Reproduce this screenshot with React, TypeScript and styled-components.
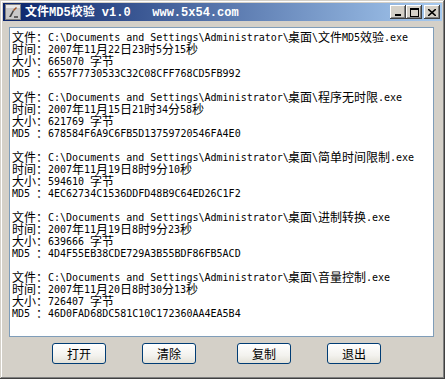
import React from 'react';
import styled, { createGlobalStyle } from 'styled-components';

type Entry = {
  file: string;
  time: string;
  size: string;
  md5: string;
};

const entries: Entry[] = [
  {
    file: '文件MD5效验.exe',
    time: '2007年11月22日23时5分15秒',
    size: '665070',
    md5: '6557F7730533C32C08CFF768CD5FB992',
  },
  {
    file: '程序无时限.exe',
    time: '2007年11月15日21时34分58秒',
    size: '621769',
    md5: '678584F6A9C6FB5D13759720546FA4E0',
  },
  {
    file: '简单时间限制.exe',
    time: '2007年11月19日8时9分10秒',
    size: '594610',
    md5: '4EC62734C1536DDFD48B9C64ED26C1F2',
  },
  {
    file: '进制转换.exe',
    time: '2007年11月19日8时9分23秒',
    size: '639666',
    md5: '4D4F55EB38CDE729A3B55BDF86FB5ACD',
  },
  {
    file: '音量控制.exe',
    time: '2007年11月20日8时30分13秒',
    size: '726407',
    md5: '46D0FAD68DC581C10C172360AA4EA5B4',
  },
];

const buttons = [
  { label: '打开', extra: 0 },
  { label: '清除', extra: 0 },
  { label: '复制', extra: 5 },
  { label: '退出', extra: 0 },
];

const GlobalStyle = createGlobalStyle`
  html, body {
    margin: 0;
    padding: 0;
    background: #d4d0c8;
  }
`;

const StDivWindow = styled.div`
  box-sizing: border-box;
  width: 445px;
  height: 379px;
  padding: 3px;
  background: #d4d0c8;
  box-shadow: inset -1px -1px #404040, inset 1px 1px #d4d0c8,
    inset -2px -2px #808080, inset 2px 2px #ffffff;
  display: flex;
  flex-direction: column;
`;

const StDivTitleBar = styled.div`
  height: 18px;
  display: flex;
  align-items: center;
  padding: 0 2px;
  background: linear-gradient(to right, #0a246a, #a6caf0);
`;

const StSpanTitle = styled.span`
  flex: 1;
  margin-left: 4px;
  color: #ffffff;
  font-weight: bold;
  font-size: 12px;
  line-height: 18px;
  white-space: pre;
`;

const StSpanTitleAscii = styled.span`
  font-family: 'Liberation Mono', monospace;
`;

const StSpanTitleCjk = styled.span`
  font-family: 'Noto Sans CJK SC', sans-serif;
`;

const StDivCaptionButtons = styled.div`
  display: flex;
  align-items: center;
`;

const StButtonCaption = styled.div<{ $gapLeft: number }>`
  box-sizing: border-box;
  width: 16px;
  height: 14px;
  margin-left: ${({ $gapLeft }) => $gapLeft}px;
  background: #d4d0c8;
  box-shadow: inset -1px -1px #404040, inset 1px 1px #ffffff,
    inset -2px -2px #808080, inset 2px 2px #d4d0c8;
  display: flex;
  align-items: center;
  justify-content: center;
`;

const StDivBody = styled.div`
  flex: 1;
  display: flex;
  flex-direction: column;
  padding: 6px 0 0 6px;
`;

const StDivTextArea = styled.div`
  box-sizing: border-box;
  width: 425px;
  height: 310px;
  border: 1px solid #7f9db9;
  background: #ffffff;
  padding: 3px 2px;
  color: #000000;
`;

const StDivLine = styled.div`
  display: flex;
  align-items: flex-start;
  height: 12px;
  white-space: pre;
`;

// every half-width char sits in a 6px cell, every CJK char in a 12px cell
const StSpanAscii = styled.span`
  display: inline-block;
  height: 12px;
  font-family: 'DejaVu Sans Mono', monospace;
  font-size: 10px;
  line-height: 14px;
`;

const StSpanCjk = styled.span`
  display: inline-block;
  height: 12px;
  font-family: 'Noto Sans CJK SC', sans-serif;
  font-size: 12px;
  line-height: 12px;
`;

const StDivButtonRow = styled.div`
  display: flex;
  margin-top: 6px;
  padding-left: 43px;
  gap: 36px;
`;

const StButton = styled.button<{ $extra: number }>`
  box-sizing: border-box;
  width: 54px;
  height: 21px;
  margin-left: ${({ $extra }) => $extra}px;
  padding: 0;
  border: 1px solid #003c74;
  border-radius: 3px;
  background: linear-gradient(to bottom, #ffffff 0%, #f3f2ee 60%, #e3e1d8 100%);
  color: #000000;
  font-family: 'Noto Sans CJK SC', sans-serif;
  font-size: 12px;
  line-height: 19px;
`;

const isCjk = (ch: string) => ch.charCodeAt(0) > 0x2e80;

const splitRuns = (text: string) => {
  const runs: { cjk: boolean; value: string }[] = [];
  for (const ch of text) {
    const cjk = isCjk(ch);
    const last = runs[runs.length - 1];
    if (last && last.cjk === cjk) last.value += ch;
    else runs.push({ cjk, value: ch });
  }
  return runs;
};

const CellText: React.FC<{ text: string }> = ({ text }) => (
  <StDivLine>
    {splitRuns(text).map((run, index) =>
      run.cjk ? (
        <StSpanCjk key={index} style={{ width: run.value.length * 12 }}>
          {run.value}
        </StSpanCjk>
      ) : (
        <StSpanAscii key={index} style={{ width: run.value.length * 6 }}>
          {run.value}
        </StSpanAscii>
      )
    )}
  </StDivLine>
);

const TitleText: React.FC<{ text: string }> = ({ text }) => (
  <StSpanTitle>
    {splitRuns(text).map((run, index) =>
      run.cjk ? (
        <StSpanTitleCjk key={index}>{run.value}</StSpanTitleCjk>
      ) : (
        <StSpanTitleAscii key={index}>{run.value}</StSpanTitleAscii>
      )
    )}
  </StSpanTitle>
);

const AppIcon: React.FC = () => (
  <svg width="16" height="16" viewBox="0 0 16 16">
    <rect x="0.5" y="0.5" width="15" height="15" fill="#c8c8c8" stroke="#808080" />
    <rect x="1" y="1" width="14" height="3" fill="#e8e8e8" />
    <path d="M4 13 L8 6 L9 7 L6 13 Z" fill="#404040" />
    <path d="M8 6 L11 3 L12 4 L9 7 Z" fill="#a05020" />
    <path d="M9 12 L13 12 L13 14 L9 14 Z" fill="#606060" />
  </svg>
);

const App: React.FC = () => {
  return (
    <>
      <GlobalStyle />
      <StDivWindow>
        <StDivTitleBar>
          <AppIcon />
          <TitleText text="文件MD5校验 v1.0   www.5x54.com" />
          <StDivCaptionButtons>
            <StButtonCaption $gapLeft={0}>
              <svg width="8" height="8" viewBox="0 0 8 8">
                <rect x="1" y="6" width="6" height="2" fill="#000" />
              </svg>
            </StButtonCaption>
            <StButtonCaption $gapLeft={0}>
              <svg width="9" height="9" viewBox="0 0 9 9">
                <rect x="0.5" y="0.5" width="8" height="8" fill="none" stroke="#000" />
                <rect x="0" y="1" width="9" height="1" fill="#000" />
              </svg>
            </StButtonCaption>
            <StButtonCaption $gapLeft={2}>
              <svg width="8" height="7" viewBox="0 0 8 7">
                <path d="M0 0 L8 7 M8 0 L0 7" stroke="#000" strokeWidth="1.6" />
              </svg>
            </StButtonCaption>
          </StDivCaptionButtons>
        </StDivTitleBar>
        <StDivBody>
          <StDivTextArea>
            {entries.map((entry, index) => (
              <React.Fragment key={index}>
                <CellText
                  text={`文件：C:\\Documents and Settings\\Administrator\\桌面\\${entry.file}`}
                />
                <CellText text={`时间：${entry.time}`} />
                <CellText text={`大小：${entry.size} 字节`} />
                <CellText text={`MD5 ：${entry.md5}`} />
                <StDivLine />
              </React.Fragment>
            ))}
          </StDivTextArea>
          <StDivButtonRow>
            {buttons.map((button) => (
              <StButton key={button.label} $extra={button.extra}>
                {button.label}
              </StButton>
            ))}
          </StDivButtonRow>
        </StDivBody>
      </StDivWindow>
    </>
  );
};

export default App;
